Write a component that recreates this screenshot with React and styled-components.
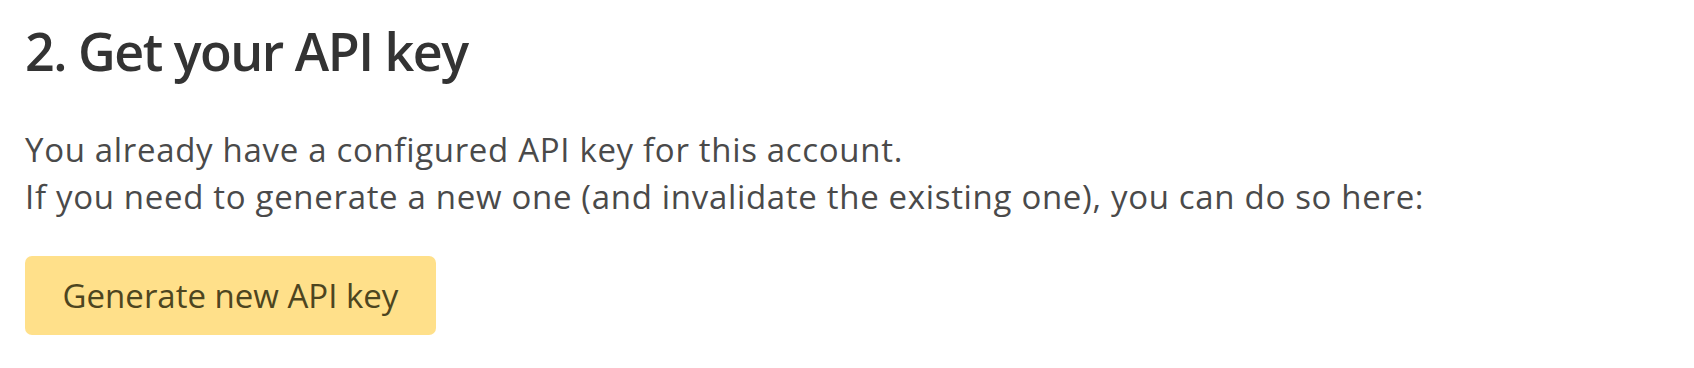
import React from 'react';
import styled, { createGlobalStyle } from 'styled-components';

const GlobalStyle = createGlobalStyle`
	body {
		margin: 0;
		background: #ffffff;
		font-family: 'Open Sans', 'Liberation Sans', sans-serif;
	}
`;

const Section = styled.section`
	display: flex;
	flex-direction: column;
	align-items: flex-start;
	padding: 19px 25px 0 25px;
`;

const Title = styled.h2`
	margin: 0;
	font-size: 52px;
	line-height: 64px;
	font-weight: 600;
	letter-spacing: -1.5px;
	color: #333333;
`;

const Text = styled.p`
	margin: 43px 0 0 0;
	font-size: 33px;
	line-height: 47px;
	letter-spacing: 0.68px;
	color: #4a4a4a;
`;

const GenerateButton = styled.button`
	margin-top: 36px;
	width: 411px;
	height: 79px;
	padding: 0;
	border: none;
	border-radius: 7px;
	background-color: #ffe08a;
	color: #4d4520;
	font-family: inherit;
	font-size: 33px;
	cursor: pointer;
`;

const ApiKeySection = () => {
	return (
		<>
			<GlobalStyle />
			<Section>
				<Title>2. Get your API key</Title>

				<Text>
					You already have a configured API key for this account.
					<br />
					If you need to generate a new one (and invalidate the existing one), you can do so here:
				</Text>

				<GenerateButton>Generate new API key</GenerateButton>
			</Section>
		</>
	);
};

export default ApiKeySection;
